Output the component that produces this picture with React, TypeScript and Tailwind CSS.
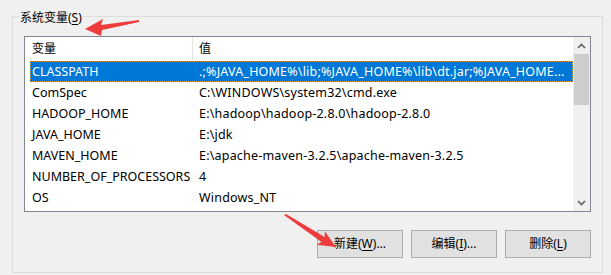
import React from "react"

const FONT = "font-['Segoe_UI','Noto_Sans','Noto_Sans_CJK_SC',sans-serif]"

const rows: [string, string][] = [
  ["CLASSPATH", ".;%JAVA_HOME%\\lib;%JAVA_HOME%\\lib\\dt.jar;%JAVA_HOME..."],
  ["ComSpec", "C:\\WINDOWS\\system32\\cmd.exe"],
  ["HADOOP_HOME", "E:\\hadoop\\hadoop-2.8.0\\hadoop-2.8.0"],
  ["JAVA_HOME", "E:\\jdk"],
  ["MAVEN_HOME", "E:\\apache-maven-3.2.5\\apache-maven-3.2.5"],
  ["NUMBER_OF_PROCESSORS", "4"],
  ["OS", "Windows_NT"],
]

function Chevron({ down }: { down?: boolean }) {
  return (
    <svg width="9" height="6" viewBox="0 0 9 6" className={down ? "rotate-180" : ""}>
      <path d="M1 5 L4.5 1.5 L8 5" fill="none" stroke="#606060" strokeWidth="1.6" />
    </svg>
  )
}

function Button({ label, hotkey, rest }: { label: string; hotkey: string; rest: string }) {
  return (
    <button className="flex h-[28px] w-[86px] items-center justify-center border border-[#adadad] bg-[#e1e1e1] text-[12px] text-black">
      {label}(<span className="underline underline-offset-2">{hotkey}</span>){rest}
    </button>
  )
}

export default function App() {
  return (
    <div className={`relative h-[275px] w-[611px] overflow-hidden bg-[#f0f0f0] ${FONT}`}>
      <div className="ml-[12px] mt-[16px] h-[257px] w-[591px] border border-[#dcdcdc] px-[11px]">
        <div className="-ml-[5px] -mt-[7px] w-fit bg-[#f0f0f0] px-px text-[12px] leading-[16px] text-black">
          系统变量(<span className="underline underline-offset-2">S</span>)
        </div>

        <div className="mt-[10px] flex h-[176px] w-[567px] border border-[#828790] bg-white">
          <div className="flex-1 text-[12.5px] text-black">
            <div className="flex h-[24px] items-center text-[12px]">
              <div className="flex h-full w-[168px] items-center border-r border-[#e5e5e5] pl-[7px]">变量</div>
              <div className="pl-[6px]">值</div>
            </div>
            {rows.map(([name, value], i) => (
              <div
                key={name}
                className={
                  i === 0
                    ? "ml-[5px] flex h-[21px] items-center border border-dotted border-[#f0a030] bg-[#0078d7] pt-px text-white"
                    : "ml-[5px] flex h-[21px] items-center border border-transparent pt-[2px]"
                }
              >
                <div className="w-[162px] pl-[1px] whitespace-nowrap">{name}</div>
                <div className="pl-[6px] whitespace-nowrap tracking-[0.2px]">{value}</div>
              </div>
            ))}
          </div>

          <div className="flex w-[17px] flex-col bg-[#f0f0f0]">
            <div className="flex h-[17px] items-center justify-center">
              <Chevron />
            </div>
            <div className="mx-px h-[51px] bg-[#cdcdcd]" />
            <div className="flex-1" />
            <div className="flex h-[17px] items-center justify-center">
              <Chevron down />
            </div>
          </div>
        </div>

        <div className="mt-[18px] flex w-[567px] justify-end gap-[8px]">
          <Button label="新建" hotkey="W" rest="..." />
          <Button label="编辑" hotkey="I" rest="..." />
          <Button label="删除" hotkey="L" rest="" />
        </div>
      </div>

      {/* annotation arrows drawn over the dialog */}
      <svg className="pointer-events-none absolute left-0 top-0" width="611" height="275">
        <polygon points="85,29 103,19 101,25 139,20 139,22 102,30 101,36" fill="#ee3b3b" />
        <polygon points="284,215 286,214 324.7,237.1 324.8,231.2 336,247 316.4,244.8 321.5,242.1" fill="#ee3b3b" />
      </svg>
    </div>
  )
}
